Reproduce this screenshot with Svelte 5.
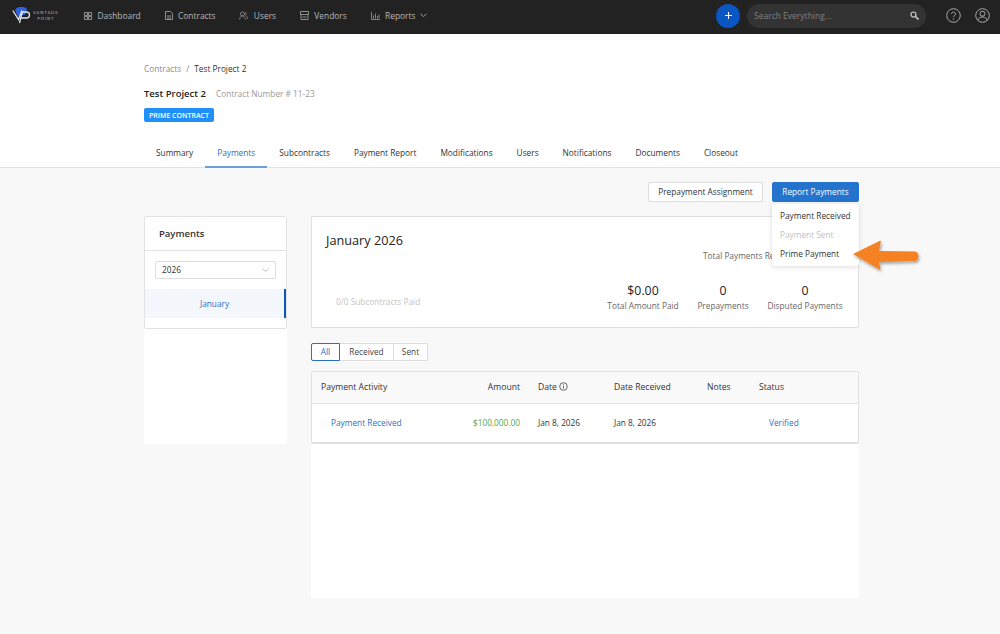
<script>
  const tabs = ['Summary','Payments','Subcontracts','Payment Report','Modifications','Users','Notifications','Documents','Closeout'];
</script>

<div class="page">
  <header class="topbar">
    <div class="logo">
      <svg width="19" height="17" viewBox="0 0 19 17">
        <path d="M3 3 C5 -1 13 -1 15 2 L13 8 H8 L6 10 Z" fill="#2f62e0"/>
        <path d="M.8 3.500 L6.500 12.500 L10 3.500" fill="none" stroke="#e2e8f2" stroke-width="1.300"/>
        <path d="M7.500 16 L10.300 5 H14.500 A3 3 0 0 1 14.500 11 H9" fill="none" stroke="#e2e8f2" stroke-width="1.300"/>
      </svg>
      <div class="logotext"><span>VANTAGE</span><span>POINT</span></div>
    </div>
    <nav class="mainnav">
      <a><svg width="8" height="8" viewBox="0 0 8 8"><path d="M.5.5h3v3h-3zM4.500.5h3v3h-3zM.5 4.500h3v3h-3zM4.500 4.500h3v3h-3z" fill="none" stroke="#8f8f8f"/></svg>Dashboard</a>
      <a><svg width="8" height="9" viewBox="0 0 8 9"><path d="M.5.5h5l2 2v6h-7zM2 5h4M2 7h4" fill="none" stroke="#8f8f8f"/></svg>Contracts</a>
      <a><svg width="9" height="9" viewBox="0 0 9 9"><circle cx="3.500" cy="3" r="2" fill="none" stroke="#8f8f8f" stroke-width=".9"/><path d="M.5 8.500c.5-2.500 1.500-3.500 3-3.500s2.500 1 3 3.500M6 1c1.500.5 1.500 3 .5 3.500M7 5c1 .5 1.500 1.500 1.700 3" fill="none" stroke="#8f8f8f" stroke-width=".8"/></svg>Users</a>
      <a><svg width="9" height="9" viewBox="0 0 9 9"><path d="M.5.5h8v3h-8zM1 3.500v5h7v-5M2.500 6h4" fill="none" stroke="#8f8f8f"/></svg>Vendors</a>
      <a><svg width="9" height="8" viewBox="0 0 9 8"><path d="M.5 0v7.500h8.500M2.500 6.500v-3M4.500 6.500v-5M6.500 6.500v-2.500M8 6.500v-4" fill="none" stroke="#8f8f8f" stroke-width=".9"/></svg>Reports<svg class="chev" width="7" height="5" viewBox="0 0 7 5"><path d="M.5.700l3 3 3-3" fill="none" stroke="#a0a0a0"/></svg></a>
    </nav>
    <div class="plus"><svg width="7" height="7" viewBox="0 0 7 7"><path d="M3.500 0v7M0 3.500h7" stroke="#fff" stroke-width="1.100"/></svg></div>
    <div class="search">
      <span>Search Everything...</span>
      <svg width="9" height="9" viewBox="0 0 9 9"><circle cx="3.500" cy="3.500" r="2.500" fill="none" stroke="#cfcfcf" stroke-width="1.200"/><path d="M5.500 5.500l3 3" stroke="#cfcfcf" stroke-width="1.600"/></svg>
    </div>
    <svg class="help" width="15" height="15" viewBox="0 0 15 15"><circle cx="7.500" cy="7.500" r="6.800" fill="none" stroke="#a8a8a8"/><path d="M5.500 6c0-2.500 4-2.500 4 0 0 1.500-2 1.500-2 3" fill="none" stroke="#a8a8a8"/><circle cx="7.500" cy="11" r=".7" fill="#a8a8a8"/></svg>
    <svg class="user" width="15" height="15" viewBox="0 0 15 15"><circle cx="7.500" cy="7.500" r="6.800" fill="none" stroke="#a8a8a8"/><circle cx="7.500" cy="5.700" r="2.500" fill="none" stroke="#a8a8a8"/><path d="M3 12.500c.5-2.500 2-3.500 4.500-3.500s4 1 4.500 3.500" fill="none" stroke="#a8a8a8"/></svg>
  </header>

  <section class="hero">
    <div class="wrap">
      <div class="crumbs"><span class="c1">Contracts</span><span class="sl">/</span><span class="c2">Test Project 2</span></div>
      <div class="titlerow"><h1>Test Project 2</h1><span>Contract Number # 11-23</span></div>
      <div class="badge">PRIME CONTRACT</div>
      <div class="tabs">
        {#each tabs as t}
          <a class:active={t === 'Payments'}>{t}</a>
        {/each}
      </div>
    </div>
  </section>

  <main class="wrap body">
    <div class="actions">
      <button class="ghost">Prepayment Assignment</button>
      <button class="primary">Report Payments</button>
      <div class="menu">
        <div>Payment Received</div>
        <div class="dis">Payment Sent</div>
        <div>Prime Payment</div>
      </div>
      <svg class="arrow" width="72" height="42" viewBox="0 0 72 42">
        <defs><filter id="s" x="-20%" y="-20%" width="140%" height="150%"><feDropShadow dx="1" dy="2" stdDeviation="1.500" flood-color="#000" flood-opacity=".35"/></filter></defs>
        <path d="M1 18 L27.500 5 C28.500 4.500 29 5 28.800 6 L27 15 L63 15.500 C67.500 15.700 67.500 24.500 63 25 L27 26 L28.300 32 C28.500 33.500 28 33.800 27 33.300 Z" fill="#f58220" filter="url(#s)"/>
      </svg>
    </div>
    <div class="cols">
      <aside class="side">
        <div class="sidecard">
          <div class="sidehead">Payments</div>
          <div class="selrow"><div class="select"><span>2026</span><svg width="7" height="4" viewBox="0 0 7 4"><path d="M.5.500l3 3 3-3" fill="none" stroke="#bdbdbd"/></svg></div></div>
          <div class="month">January</div>
        </div>
      </aside>
      <div class="content">
        <div class="summary">
          <h2>January 2026</h2>
          <div class="recv">Total Payments Received</div>
          <div class="stats">
            <div class="paid">0/0 Subcontracts Paid</div>
            <div class="stat s1"><b>$0.00</b><span>Total Amount Paid</span></div>
            <div class="stat s2"><b>0</b><span>Prepayments</span></div>
            <div class="stat s3"><b>0</b><span>Disputed Payments</span></div>
          </div>
        </div>
        <div class="filters"><span class="on">All</span><span>Received</span><span>Sent</span></div>
        <div class="table">
          <div class="row head">
            <span class="a">Payment Activity</span><span class="b">Amount</span>
            <span class="d">Date <svg width="9" height="9" viewBox="0 0 9 9"><circle cx="4.500" cy="4.500" r="3.800" fill="none" stroke="#555" stroke-width=".9"/><path d="M4.500 4v2.500M4.500 2.300v1" stroke="#555" stroke-width=".9"/></svg></span>
            <span class="e">Date Received</span><span class="f">Notes</span><span class="g">Status</span>
          </div>
          <div class="row data">
            <span class="a link ind">Payment Received</span><span class="b green">$100,000.00</span>
            <span class="d">Jan 8, 2026</span><span class="e">Jan 8, 2026</span><span class="f"></span><span class="g link ind">Verified</span>
          </div>
        </div>
      </div>
    </div>
  </main>
</div>

<style>
  :global(body) { margin: 0; background: #f8f8f8; font-family: "Open Sans", sans-serif; }
  .page { height: 634px; overflow: hidden; font-size: 8.300px; color: #333; }
  .topbar { height: 34px; background: #222; display: flex; align-items: center; box-sizing: border-box; padding: 0 0 3px 12px; }
  .logo { width: 72px; display: flex; align-items: center; gap: 2px; }
  .logotext { display: flex; flex-direction: column; align-items: center; font-size: 4.200px; line-height: 6px; letter-spacing: .9px; color: #b5b5b5; font-family: "DejaVu Sans", sans-serif; }
  .mainnav { display: flex; align-items: center; gap: 23.800px; width: 632px; font-size: 8.400px; color: #b8b8b8; }
  .mainnav a { display: flex; align-items: center; gap: 5.500px; }
  .chev { margin-left: -1.500px; }
  .plus { width: 24px; height: 24px; border-radius: 50%; background: #0a56c2; display: flex; align-items: center; justify-content: center; }
  .search { width: 179px; height: 24px; margin-left: 7px; border-radius: 12px; background: #333; display: flex; align-items: center; justify-content: space-between; box-sizing: border-box; padding: 0 7px; color: #808080; font-size: 8.500px; }
  .help { margin-left: 20px; }
  .user { margin-left: 14px; }

  .wrap { width: 715px; margin-left: 144px; }
  .hero { background: #fff; height: 133px; border-bottom: 1px solid #e2e2e2; }
  .hero .wrap { padding-top: 28px; }
  .crumbs { height: 14px; line-height: 14px; }
  .c1 { color: #8c8c8c; } .sl { color: #888; margin: 0 5px; } .c2 { color: #333; }
  .titlerow { display: flex; align-items: center; gap: 10px; margin-top: 10px; height: 14px; color: #999; }
  h1 { margin: 0; font-size: 9.500px; font-weight: 600; color: #222; }
  .badge { margin-top: 8px; background: #1f8ffa; color: #fff; font-size: 7px; font-weight: 600; width: 70px; height: 14px; line-height: 15px; text-align: center; border-radius: 2px; }
  .tabs { display: flex; margin-top: 10px; height: 36px; }
  .tabs a { padding: 0 12px; line-height: 42px; color: #333; height: 36px; box-sizing: border-box; border-bottom: 2px solid transparent; }
  .tabs a.active { color: #2a6fc2; border-bottom-color: #6e9fdc; }

  .body { position: relative; }
  .actions { height: 48px; display: flex; justify-content: flex-end; align-items: flex-start; gap: 9px; padding-top: 14px; box-sizing: border-box; }
  button { font: inherit; height: 20px; padding: 0 0 2px; border-radius: 2px; cursor: pointer; }
  .ghost { width: 115px; background: #fff; border: 1px solid #ddd; color: #333; }
  .primary { width: 87px; background: #2473cc; border: 1px solid #2473cc; color: #fff; }
  .menu { position: absolute; left: 628px; top: 36px; width: 87px; height: 62px; background: #fff; border-radius: 2px; box-shadow: 0 1px 5px rgba(0,0,0,.14); padding-top: 2px; box-sizing: border-box; z-index: 3; }
  .menu div { height: 19px; line-height: 19px; padding-left: 8px; color: #333; }
  .menu .dis { color: #c2c2c2; }
  .arrow { position: absolute; left: 708px; top: 68px; z-index: 4; }

  .cols { display: flex; gap: 24px; }
  .side { width: 143px; height: 228px; background: #fff; }
  .sidecard { height: 113px; border: 1px solid #e2e2e2; border-radius: 2px; box-sizing: border-box; }
  .sidehead { height: 34px; line-height: 33px; padding-left: 14px; font-size: 9.500px; font-weight: 600; border-bottom: 1px solid #e2e2e2; box-sizing: border-box; }
  .selrow { padding: 10px 10px 0; height: 38px; box-sizing: border-box; }
  .select { height: 18px; border: 1px solid #ddd; border-radius: 2px; display: flex; justify-content: space-between; align-items: center; padding: 0 6px 1px; box-sizing: border-box; }
  .month { height: 29px; line-height: 29px; text-align: center; color: #2a6fc2; background: #f4f8fd; border-right: 2px solid #0a56c2; }

  .content { width: 548px; height: 382px; background: linear-gradient(#f8f8f8 0 227px, #fff 227px); }
  .summary { height: 112px; background: #fff; border: 1px solid #e0e0e0; border-radius: 2px; box-sizing: border-box; position: relative; }
  h2 { margin: 0; position: absolute; left: 14px; top: 13.500px; font-size: 12.700px; font-weight: 400; color: #222; line-height: 18px; }
  .recv { position: absolute; left: 391px; top: 32.500px; color: #666; white-space: nowrap; }
  .stats { position: absolute; left: 0; right: 0; top: 64.500px; }
  .paid { position: absolute; left: 24px; top: 14.500px; color: #c4c4c4; line-height: 12px; white-space: nowrap; }
  .stat { position: absolute; top: 0; display: flex; flex-direction: column; align-items: center; transform: translateX(-50%); white-space: nowrap; color: #666; }
  .stat b { font-size: 12.300px; font-weight: 400; color: #222; line-height: 17px; }
  .stat span { line-height: 13px; }
  .s1 { left: 331px; } .s2 { left: 411px; } .s3 { left: 493px; }
  .filters { display: flex; margin-top: 15px; height: 18px; }
  .filters span { border: 1px solid #ddd; border-left: 0; background: #fff; line-height: 16px; box-sizing: border-box; text-align: center; height: 18px; width: 54px; color: #444; }
  .filters span.on { width: 29px; border: 1px solid #2a6fc2; color: #2a6fc2; border-radius: 2px 0 0 2px; }
  .filters span:last-child { width: 34px; border-radius: 0 2px 2px 0; }
  .table { margin-top: 10px; height: 73px; background: #fff; border: 1px solid #e0e0e0; border-bottom-width: 2px; border-radius: 2px; box-sizing: border-box; }
  .row { display: grid; grid-template-columns: 149px 50px 76px 93px 52px 1fr; align-items: center; padding-left: 9px; box-sizing: border-box; }
  .head { height: 32px; background: #f9f9f9; border-bottom: 1px solid #e4e4e4; color: #333; padding-bottom: 2px; font-size: 8.600px; }
  .data { height: 38px; padding-bottom: 2px; }
  .row span { white-space: nowrap; }
  .b { text-align: right; }
  .d { padding-left: 18px; display: flex; align-items: center; gap: 2px; }
  .e { padding-left: 18px; }
  .f { padding-left: 18px; }
  .g { padding-left: 18px; }
  .ind { padding-left: 10px; }
  .g.ind { padding-left: 28px; }
  .link { color: #2a6fc2; }
  .green { color: #5ba53a; }
</style>
